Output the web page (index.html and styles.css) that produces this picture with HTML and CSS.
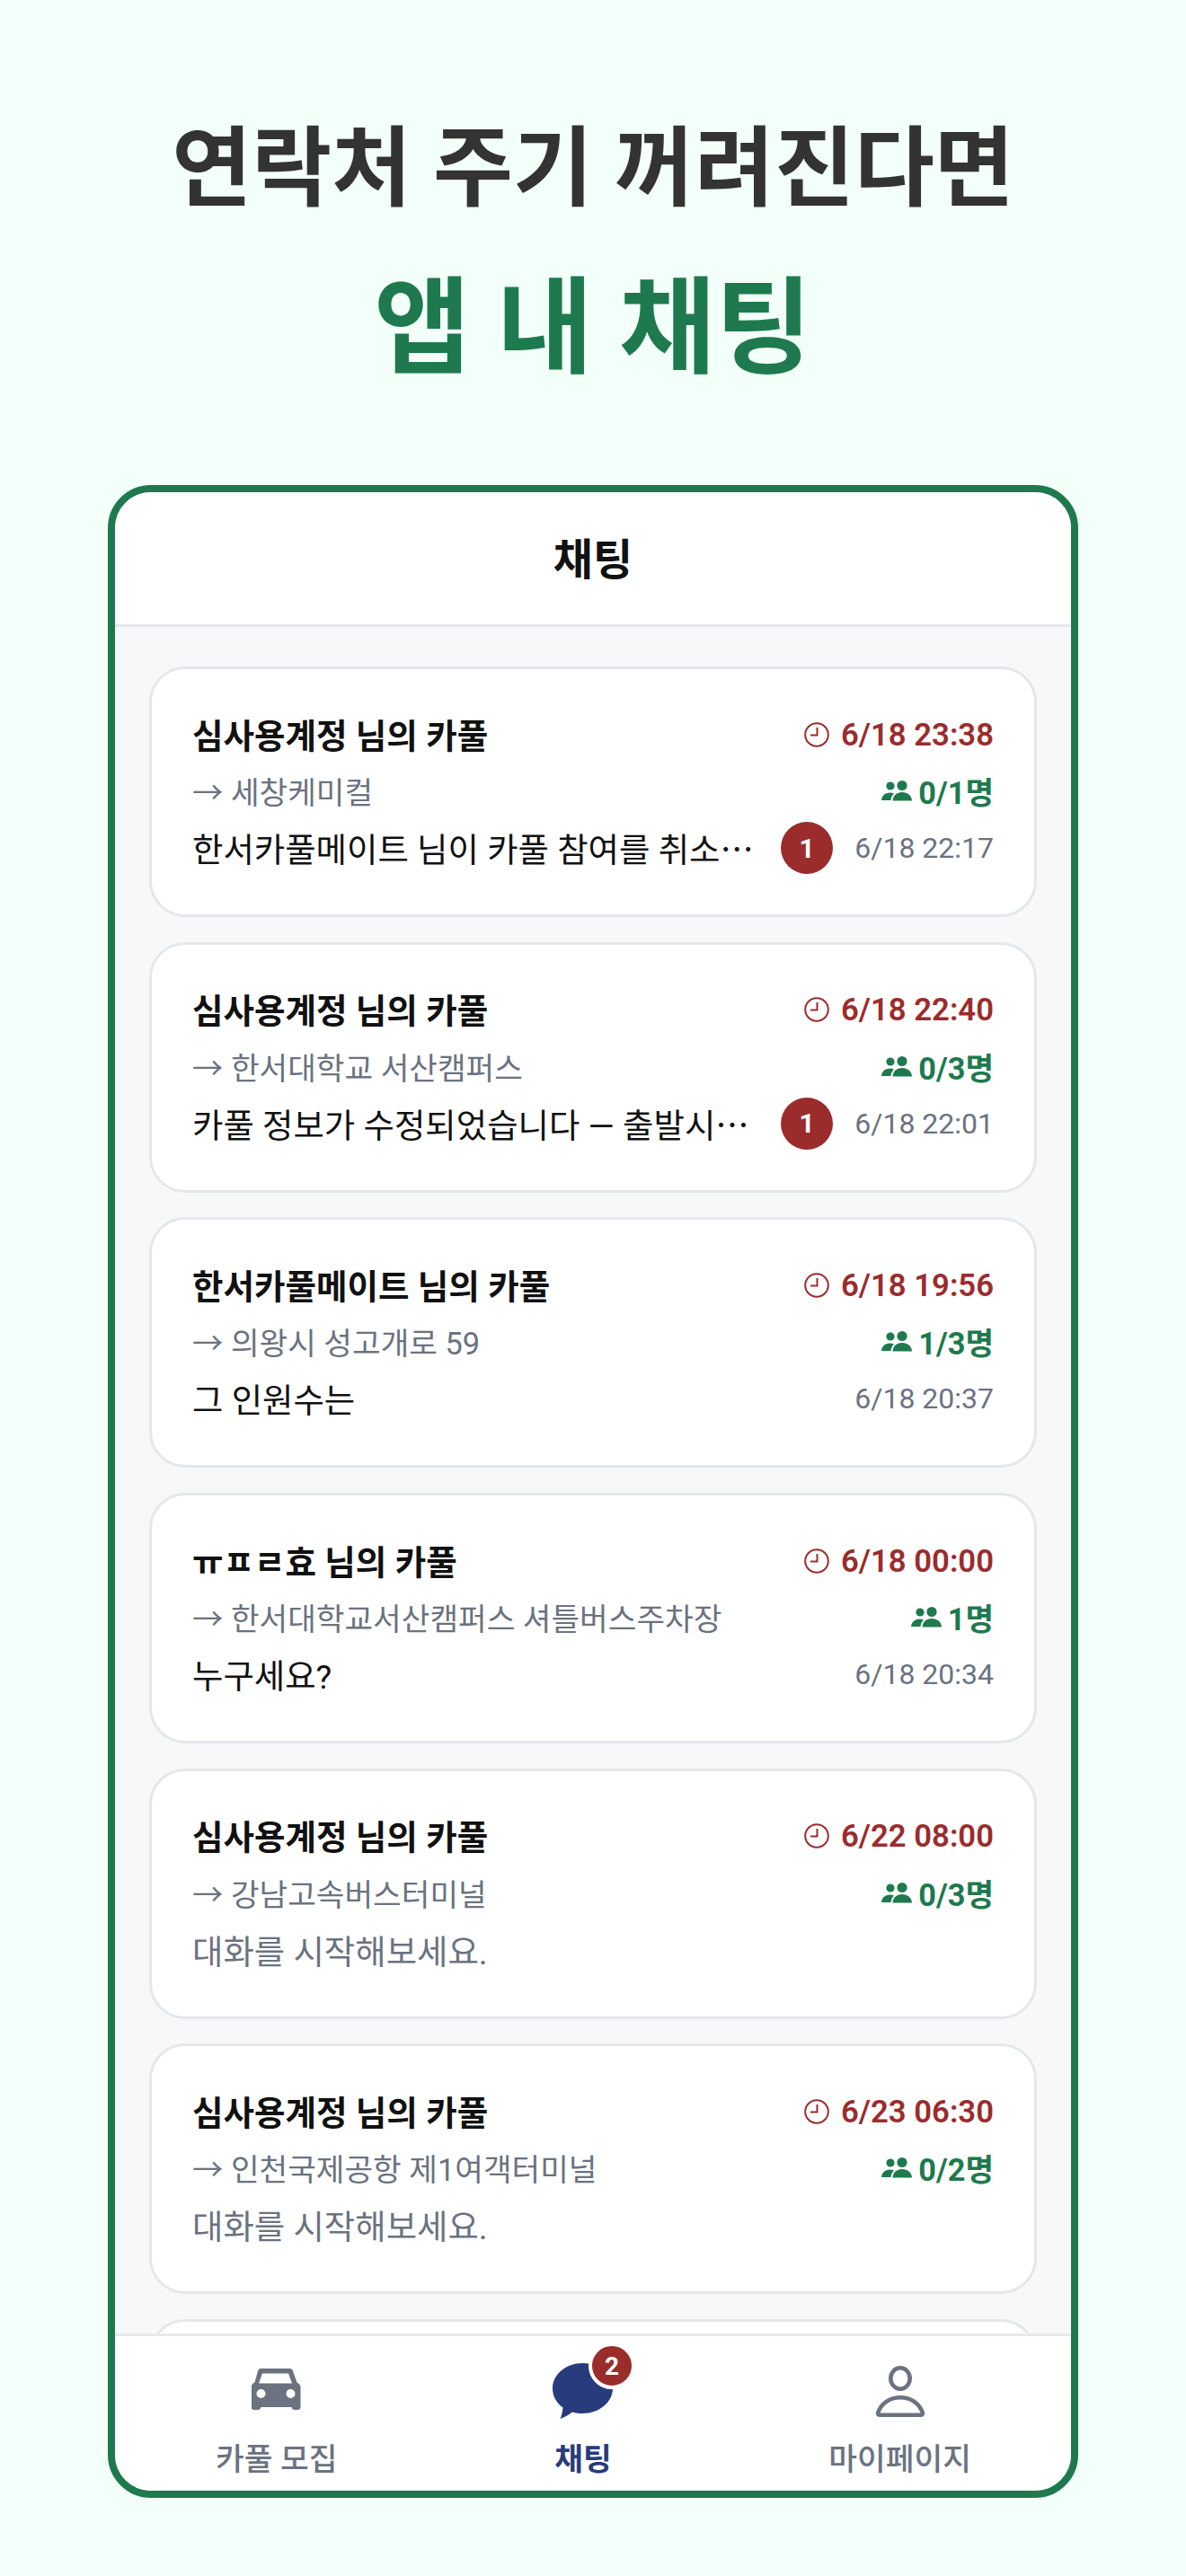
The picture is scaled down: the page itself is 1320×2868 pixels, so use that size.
FILE: index.html
```html
<!DOCTYPE html>
<html lang="ko">
<head>
<meta charset="utf-8">
<title>앱 내 채팅</title>
<link rel="stylesheet" href="styles.css">
</head>
<body>
<svg class="defs" width="0" height="0" aria-hidden="true">
  <symbol id="clock" viewBox="0 0 28 28"><circle cx="14" cy="14" r="12.8" fill="none" stroke="currentColor" stroke-width="2"/><path d="M14.5 6v8.5H7" fill="none" stroke="currentColor" stroke-width="2"/></symbol>
  <symbol id="users" viewBox="0 0 34 24"><circle cx="10" cy="7" r="4.6" fill="currentColor"/><circle cx="23" cy="6.5" r="5.6" fill="currentColor"/><path d="M0 23c.5-5 4-8.500 9.500-8.500 1.800 0 3.300.4 4.500 1-2 1.900-3.200 4.500-3.500 7.500z" fill="currentColor"/><path d="M12.500 23.500c.5-6 4.500-9.500 10.500-9.500s10.500 3.500 11 9.500z" fill="currentColor"/></symbol>
</svg>
<main class="page">
  <h1 class="hero">
    <span class="hero-top">연락처 주기 꺼려진다면</span>
    <span class="hero-main">앱 내 채팅</span>
  </h1>
  <section class="phone">
    <header class="app-header">채팅</header>
    <div class="list">
      <article class="card">
        <div class="row"><span class="name">심사용계정 님의 카풀</span><span class="when"><svg class="ic-clock"><use href="#clock"/></svg>6/18 23:38</span></div>
        <div class="row"><span class="dest">→ 세창케미컬</span><span class="seats"><svg class="ic-users"><use href="#users"/></svg>0/1명</span></div>
        <div class="row"><span class="msg">한서카풀메이트 님이 카풀 참여를 취소<span class="dots">…</span></span><span class="unread">1</span><span class="stamp">6/18 22:17</span></div>
      </article>
      <article class="card">
        <div class="row"><span class="name">심사용계정 님의 카풀</span><span class="when"><svg class="ic-clock"><use href="#clock"/></svg>6/18 22:40</span></div>
        <div class="row"><span class="dest">→ 한서대학교 서산캠퍼스</span><span class="seats"><svg class="ic-users"><use href="#users"/></svg>0/3명</span></div>
        <div class="row"><span class="msg">카풀 정보가 수정되었습니다 — 출발시<span class="dots">…</span></span><span class="unread">1</span><span class="stamp">6/18 22:01</span></div>
      </article>
      <article class="card">
        <div class="row"><span class="name">한서카풀메이트 님의 카풀</span><span class="when"><svg class="ic-clock"><use href="#clock"/></svg>6/18 19:56</span></div>
        <div class="row"><span class="dest">→ 의왕시 성고개로 59</span><span class="seats"><svg class="ic-users"><use href="#users"/></svg>1/3명</span></div>
        <div class="row"><span class="msg">그 인원수는</span><span class="stamp">6/18 20:37</span></div>
      </article>
      <article class="card">
        <div class="row"><span class="name">ㅠㅍㄹ효 님의 카풀</span><span class="when"><svg class="ic-clock"><use href="#clock"/></svg>6/18 00:00</span></div>
        <div class="row"><span class="dest">→ 한서대학교서산캠퍼스 셔틀버스주차장</span><span class="seats"><svg class="ic-users"><use href="#users"/></svg>1명</span></div>
        <div class="row"><span class="msg">누구세요?</span><span class="stamp">6/18 20:34</span></div>
      </article>
      <article class="card">
        <div class="row"><span class="name">심사용계정 님의 카풀</span><span class="when"><svg class="ic-clock"><use href="#clock"/></svg>6/22 08:00</span></div>
        <div class="row"><span class="dest">→ 강남고속버스터미널</span><span class="seats"><svg class="ic-users"><use href="#users"/></svg>0/3명</span></div>
        <div class="row"><span class="msg msg-empty">대화를 시작해보세요.</span></div>
      </article>
      <article class="card">
        <div class="row"><span class="name">심사용계정 님의 카풀</span><span class="when"><svg class="ic-clock"><use href="#clock"/></svg>6/23 06:30</span></div>
        <div class="row"><span class="dest">→ 인천국제공항 제1여객터미널</span><span class="seats"><svg class="ic-users"><use href="#users"/></svg>0/2명</span></div>
        <div class="row"><span class="msg msg-empty">대화를 시작해보세요.</span></div>
      </article>
      <article class="card"></article>
    </div>
    <nav class="tabs">
      <a class="tab">
        <svg class="tab-icon" viewBox="1.500 0 56 62" width="56" height="62"><path fill="#6b7280" fill-rule="evenodd" d="M12 6h32c1.500 0 2.800.8 3.400 2.200l4.600 13.300c2.400 1 4 3 4 5.500V49c0 1.700-1.300 3-3 3h-3.500c-1.800 0-3-1-3.500-3H12c-.5 2-1.700 3-3.500 3H4c-1.700 0-3-1.300-3-3V27c0-2.500 1.600-4.500 4-5.500L8.600 8.200C9.200 6.800 10.500 6 12 6zM13.500 11.500L9.500 22.500h37l-4-11zM12 29a5 5 0 1 0 0 10 5 5 0 0 0 0-10zM45 29a5 5 0 1 0 0 10 5 5 0 0 0 0-10z"/></svg>
        <span>카풀 모집</span>
      </a>
      <a class="tab tab-on">
        <svg class="tab-icon" viewBox="0 0 68 62" width="68" height="62"><path fill="#283b7c" d="M33.500 0C15 0 0 12.500 0 28c0 9 4.500 16.500 11.500 21.500-.3 4.500-1.500 9-3 12.500 5-1.500 9.500-4.500 13.500-7.500 3.500 1 7.500 1.500 11.500 1.500 18.500 0 33.500-12.500 33.500-28S52 0 33.500 0z"/></svg>
        <span class="tab-badge">2</span>
        <span>채팅</span>
      </a>
      <a class="tab">
        <svg class="tab-icon" viewBox="0 0 56 62" width="56" height="62"><ellipse cx="28" cy="17" rx="10.700" ry="11.700" fill="none" stroke="#6b7280" stroke-width="4.600"/><path fill="none" stroke="#6b7280" stroke-width="4.600" stroke-linejoin="round" d="M5 57.700c-2 0-2.200-1.500-1.500-3.500C7 45 16 38.300 28 38.300s21 6.700 24.500 15.900c.7 2 .5 3.500-1.500 3.500z"/></svg>
        <span>마이페이지</span>
      </a>
    </nav>
  </section>
</main>
</body>
</html>
```
FILE: styles.css
```css
* { box-sizing: border-box; }
html, body { margin: 0; padding: 0; }
body {
  background: #f3fff9;
  font-family: Roboto, "Noto Sans CJK KR", sans-serif;
  color: #111;
}
.defs { position: absolute; }
.page { width: 1320px; height: 2868px; overflow: hidden; display: flex; flex-direction: column; align-items: center; }
.hero { margin: 0; padding-top: 102px; display: flex; flex-direction: column; align-items: center; height: 540px; font-weight: 700; }
.hero-top { font-size: 96.7px; line-height: 172px; height: 172px; color: #333; font-weight: 600; }
.hero-main { font-size: 116.7px; line-height: 172px; height: 172px; color: #1e7a4e; padding-top: 6px; }

.phone { width: 1080px; height: 2241px; border: 8px solid #1e7a4e; border-radius: 48px; background: #fff; overflow: hidden; display: flex; flex-direction: column; }
.app-header { height: 150px; flex: none; display: flex; align-items: center; justify-content: center; padding-bottom: 6px; font-size: 48px; font-weight: 700; color: #111; background: #fff; border-bottom: 3px solid #e7e8ec; }

.list { flex: 1; min-height: 0; overflow: hidden; background: #f7f8fa; padding: 44px 38px 0; display: flex; flex-direction: column; gap: 27.700px; }
.card { flex: none; height: 279px; background: #fff; border: 3px solid #e5e7eb; border-radius: 40px; padding: 39px 45px; }
.row { height: 64px; display: flex; align-items: center; white-space: nowrap; }
.name { font-size: 37.500px; font-weight: 700; color: #111; }
.when { margin-left: auto; display: flex; align-items: center; font-size: 34.700px; font-weight: 600; color: #9b2c2c; padding-top: 3px; }
.ic-clock { width: 28px; height: 28px; margin-right: 13px; }
.dest { font-size: 34.400px; color: #6b7280; }
.seats { margin-left: auto; display: flex; align-items: center; font-size: 34.300px; font-weight: 700; color: #1e7a4e; }
.ic-users { width: 34px; height: 24px; margin-right: 7px; }
.msg { font-size: 37.400px; color: #111; flex: 1; min-width: 0; }
.msg-empty { color: #6b7280; }
.dots { font-family: "Noto Sans CJK KR", sans-serif; }
.unread { flex: none; width: 58px; height: 58px; border-radius: 50%; background: #9b2c2c; color: #fff; font-size: 30px; font-weight: 700; display: flex; align-items: center; justify-content: center; margin-right: 24px; }
.stamp { font-size: 32px; color: #6b7280; }

.tabs { flex: none; height: 175px; background: #fff; border-top: 3px solid #e7e8ec; padding: 0 111px 0 112px; display: flex; justify-content: space-between; position: relative; }
.tab { position: relative; display: flex; flex-direction: column; align-items: center; font-size: 34.500px; color: #6b7280; font-weight: 500; padding-top: 30px; }
.tab-icon { display: block; height: 62px; margin-bottom: 17px; }
.tab-on { color: #283b7c; font-weight: 700; }
.tab-badge { position: absolute; left: 40px; top: 7px; width: 52px; height: 52px; border: 4px solid #fff; border-radius: 50%; background: #9b2c2c; color: #fff; font-size: 28px; font-weight: 700; display: flex; align-items: center; justify-content: center; box-sizing: border-box; }
```
